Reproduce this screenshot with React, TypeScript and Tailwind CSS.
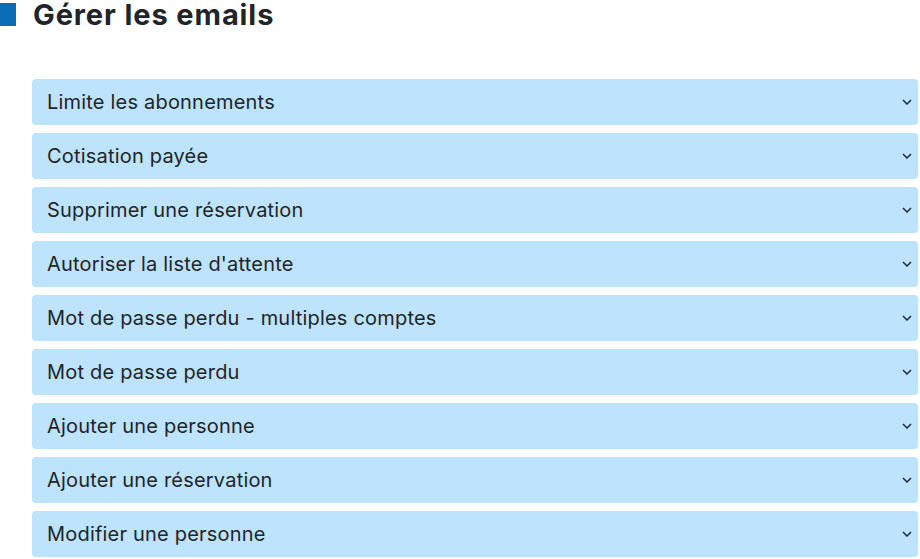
const ITEMS = [
  "Limite les abonnements",
  "Cotisation payée",
  "Supprimer une réservation",
  "Autoriser la liste d'attente",
  "Mot de passe perdu - multiples comptes",
  "Mot de passe perdu",
  "Ajouter une personne",
  "Ajouter une réservation",
  "Modifier une personne",
];

function Chevron() {
  return (
    <svg width="10" height="6" viewBox="0 0 10 6" fill="none" className="shrink-0">
      <path d="M1 1l4 4 4-4" stroke="#1e2a3a" strokeWidth="1.5" />
    </svg>
  );
}

export default function App() {
  return (
    <div className="h-[559px] w-[920px] overflow-hidden bg-white font-['Inter',sans-serif] text-[#212529]">
      {/* Section title */}
      <div className="flex items-stretch pt-[3px]">
        <div className="w-4 bg-[#0b6db6]" />
        <h2 className="pl-[17px] text-[29px] font-bold leading-[23px] tracking-[0.9px]">Gérer les emails</h2>
      </div>

      {/* Email templates list */}
      <div className="mt-[53px] ml-8 mr-[2px] flex flex-col gap-2">
        {ITEMS.map((label) => (
          <button
            key={label}
            type="button"
            className="flex h-[46px] w-full items-center justify-between rounded-[4px] bg-[#bee3fc] pl-[15px] pr-[6px] text-left text-[20px] tracking-[0.2px]"
          >
            <span>{label}</span>
            <Chevron />
          </button>
        ))}
      </div>
    </div>
  );
}
